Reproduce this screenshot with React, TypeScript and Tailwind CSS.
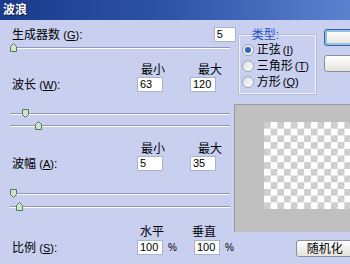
import React from 'react';

const font = { fontFamily: '"Liberation Sans", "Noto Sans CJK SC", sans-serif' };

const Key = ({ k }: { k: string }) => (
  <span className="text-[11px]">
    (<span className="underline">{k}</span>)
  </span>
);

const NumBox = ({ value, w = 'w-[26px]' }: { value: string; w?: string }) => (
  <div
    className={`${w} h-[15px] bg-white border border-[#a9b3c9] text-[11px] leading-[13px] pl-[2px] text-black`}
  >
    {value}
  </div>
);

// 滑块：thumb 方向 up/down
const Thumb = ({ dir }: { dir: 'up' | 'down' }) => (
  <svg width="7" height="9" viewBox="0 0 7 9">
    {dir === 'up' ? (
      <path d="M3.5 0.5 L6.5 3.5 L6.5 8.5 L0.5 8.5 L0.5 3.5 Z" fill="#cfe3cf" stroke="#4e7a5a" strokeWidth="1" />
    ) : (
      <path d="M0.5 0.5 L6.5 0.5 L6.5 5.5 L3.5 8.5 L0.5 5.5 Z" fill="#cfe3cf" stroke="#4e7a5a" strokeWidth="1" />
    )}
  </svg>
);

const Slider = ({ at, dir }: { at: number; dir: 'up' | 'down' }) => (
  <div className="relative h-[10px] w-[220px]">
    <div className="absolute left-0 right-0 top-[4px] h-[1px] bg-[#8f98b8]" />
    <div className="absolute left-0 right-0 top-[5px] h-[1px] bg-white" />
    <div className="absolute top-[0px]" style={{ left: at }}>
      <Thumb dir={dir} />
    </div>
  </div>
);

const Radio = ({ checked, label, k }: { checked?: boolean; label: string; k: string }) => (
  <div className="flex items-center h-[16px] whitespace-nowrap">
    <div className="shrink-0 w-[12px] h-[12px] rounded-full border border-[#9aa3b5] bg-gradient-to-br from-[#d9dce3] to-white flex items-center justify-center">
      {checked && <div className="w-[6px] h-[6px] rounded-full bg-[#2f63b8]" />}
    </div>
    <span className="ml-[3px]">{label}</span>
    <span className="ml-[2px]">
      <Key k={k} />
    </span>
  </div>
);

const Button = ({ children, focus }: { children?: React.ReactNode; focus?: boolean }) => (
  <div
    className={`w-[75px] h-[17px] rounded-[3px] border ${
      focus ? 'border-[#3c5f8f] shadow-[inset_0_0_0_2px_#8fc2f0]' : 'border-[#8a8f9c]'
    } bg-gradient-to-b from-white to-[#e4e3dc] flex items-center pl-[10px] text-[12px]`}
  >
    {children}
  </div>
);

export default function App() {
  return (
    <div className="w-[350px] h-[264px] overflow-hidden bg-[#c8cfef] text-black text-[12px] leading-[14px]" style={font}>
      <div className="h-[20px] bg-gradient-to-r from-[#1c3a8c] via-[#2f55a8] to-[#5c82cf] flex items-center pl-[3px]">
        <span className="text-white font-bold text-[12px] [text-shadow:1px_1px_0_#0a1a4a]">波浪</span>
      </div>

      <div className="flex">
        {/* 左侧 */}
        <div className="w-[228px] ml-[10px] flex flex-col">
          <div className="flex items-center h-[15px] mt-[7px]">
            <span className="ml-[2px]">
              生成器数 <Key k="G" />:
            </span>
            <div className="ml-auto mr-[-2px]">
              <NumBox value="5" w="w-[22px]" />
            </div>
          </div>
          <div className="mt-[1px]">
            <Slider at={0} dir="up" />
          </div>

          <div className="flex mt-[10px] h-[14px]">
            <span className="ml-[131px]">最小</span>
            <span className="ml-[33px]">最大</span>
          </div>
          <div className="flex items-center h-[15px]">
            <span className="ml-[2px] w-[125px]">
              波长 <Key k="W" />:
            </span>
            <NumBox value="63" />
            <div className="ml-[27px]">
              <NumBox value="120" />
            </div>
          </div>
          <div className="mt-[17px]">
            <Slider at={12} dir="down" />
          </div>
          <div className="mt-[2px]">
            <Slider at={25} dir="up" />
          </div>

          <div className="flex mt-[11px] h-[14px]">
            <span className="ml-[131px]">最小</span>
            <span className="ml-[33px]">最大</span>
          </div>
          <div className="flex items-center h-[15px]">
            <span className="ml-[2px] w-[125px]">
              波幅 <Key k="A" />:
            </span>
            <NumBox value="5" />
            <div className="ml-[27px]">
              <NumBox value="35" />
            </div>
          </div>
          <div className="mt-[18px]">
            <Slider at={0} dir="down" />
          </div>
          <div className="mt-[3px]">
            <Slider at={6} dir="up" />
          </div>

          <div className="flex mt-[13px] h-[14px]">
            <span className="ml-[130px]">水平</span>
            <span className="ml-[28px]">垂直</span>
          </div>
          <div className="flex items-center h-[15px] mt-[1px]">
            <span className="ml-[2px] w-[125px]">
              比例 <Key k="S" />:
            </span>
            <NumBox value="100" />
            <span className="ml-[5px] text-[10px]">%</span>
            <div className="ml-[17px]">
              <NumBox value="100" />
            </div>
            <span className="ml-[5px] text-[10px]">%</span>
          </div>
        </div>

        {/* 右侧 */}
        <div className="flex flex-col w-[200px]">
          <div className="flex mt-[8px]">
            <fieldset className="shrink-0 ml-[5px] w-[77px] h-[66px] border border-[#eef1fb] shadow-[0_0_0_1px_#b4bcd8] pl-[2px] pr-0 pt-0">
              <legend className="ml-[9px] px-[1px] text-[#1f4fc8]">类型:</legend>
              <Radio checked label="正弦" k="I" />
              <Radio label="三角形" k="T" />
              <Radio label="方形" k="Q" />
            </fieldset>
            <div className="ml-[8px] flex flex-col gap-[9px] mt-[1px]">
              <Button focus />
              <Button />
            </div>
          </div>

          <div className="mt-[10px] h-[128px] bg-[#c0c0c0] border-t border-l border-[#9a9a9a] pt-[17px] pl-[29px]">
            <div
              className="h-[87px] w-[200px]"
              style={{
                backgroundColor: '#ffffff',
                backgroundImage:
                  'linear-gradient(45deg, #cccccc 25%, transparent 25%, transparent 75%, #cccccc 75%), linear-gradient(45deg, #cccccc 25%, transparent 25%, transparent 75%, #cccccc 75%)',
                backgroundSize: '13.4px 13.4px',
                backgroundPosition: '6.7px 0, 0 6.7px',
              }}
            />
          </div>

          <div className="mt-[8px] ml-[62px]">
            <Button>随机化</Button>
          </div>
        </div>
      </div>
    </div>
  );
}
